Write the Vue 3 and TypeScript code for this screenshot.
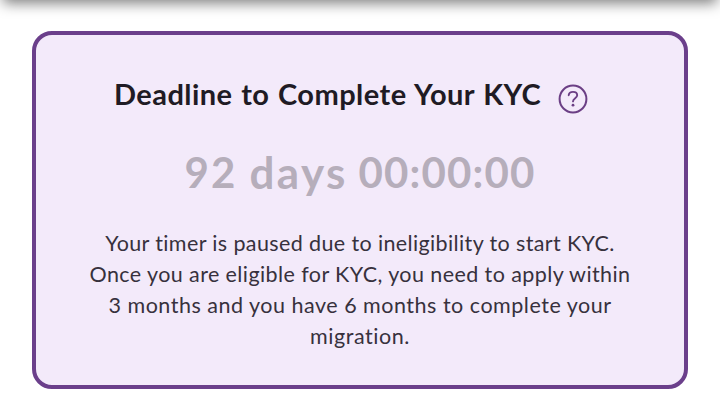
<script setup lang="ts">
const title: string = 'Deadline to Complete Your KYC'
const remaining = { count: '92', unit: 'days', clock: '00:00:00' }
const lines: string[] = [
  'Your timer is paused due to ineligibility to start KYC.',
  'Once you are eligible for KYC, you need to apply within',
  '3 months and you have 6 months to complete your',
  'migration.',
]
</script>

<template>
  <div class="page">
    <div class="topbar"></div>
    <section class="card">
      <header class="heading">
        <h1 class="title">{{ title }}</h1>
        <svg class="help" viewBox="0 0 30 30" fill="none" stroke="#6b3f85" stroke-linecap="round">
          <circle cx="15" cy="15" r="13.4" stroke-width="2" />
          <path d="M10.7 11.2C11 9.1 12.7 7.9 15 7.9C17.5 7.9 19.2 9.3 19.2 11.3C19.2 14.2 15 14.2 15 17.4" stroke-width="1.9" />
          <circle cx="15" cy="21.2" r="1.4" fill="#6b3f85" stroke="none" />
        </svg>
      </header>
      <div class="timer">
        <span class="count">{{ remaining.count }}</span>
        <span class="unit">{{ remaining.unit }}</span>
        <span class="clock">{{ remaining.clock }}</span>
      </div>
      <p class="message">
        <span v-for="(line, i) in lines" :key="i" class="line" :class="'line-' + i">{{ line }}</span>
      </p>
    </section>
  </div>
</template>

<style>
body {
  margin: 0;
  background: #fff;
}
</style>

<style scoped>
.page {
  position: relative;
  box-sizing: border-box;
  width: 720px;
  height: 408px;
  padding: 31px 32px 19px;
  overflow: hidden;
  background: #fff;
  font-family: Lato, "Open Sans", sans-serif;
}
.topbar {
  position: absolute;
  left: 3px;
  right: 3px;
  top: -40px;
  height: 40px;
  box-shadow: 0 3px 14px rgba(0, 0, 0, 0.52);
}
.card {
  box-sizing: border-box;
  height: 358px;
  padding-top: 39px;
  border: 4px solid #6b3f8b;
  border-radius: 20px;
  background: #f3eafa;
  text-align: center;
}
.heading {
  display: flex;
  align-items: flex-start;
  height: 71px;
  padding-left: 78px;
}
.title {
  margin: 0;
  font-size: 29px;
  line-height: 40px;
  font-weight: 700;
  letter-spacing: 0.45px;
  word-spacing: 1.1px;
  color: #1f1b24;
  white-space: nowrap;
  width: 444px;
  text-align: left;
}
.help {
  flex: none;
  width: 30px;
  height: 30px;
  margin-top: 10px;
}
.timer {
  display: flex;
  justify-content: center;
  height: 83px;
  padding-left: 1px;
  font-size: 42px;
  line-height: 54px;
  font-weight: 700;
  color: #b6aebb;
  white-space: nowrap;
}
.count {
  width: 65px;
  letter-spacing: 2.2px;
  text-align: left;
}
.unit {
  width: 109px;
  font-size: 44px;
  letter-spacing: 2.4px;
  text-align: left;
}
.clock {
  width: 178px;
  letter-spacing: 1.15px;
  text-align: left;
}
.message {
  margin: 0;
  font-size: 21.5px;
  line-height: 31px;
  color: #37313d;
}
.line {
  display: block;
  white-space: nowrap;
}
.line-0 {
  letter-spacing: 0.38px;
}
.line-1 {
  letter-spacing: 0.41px;
}
.line-2 {
  letter-spacing: 0.51px;
}
.line-3 {
  letter-spacing: 0.55px;
}
</style>
